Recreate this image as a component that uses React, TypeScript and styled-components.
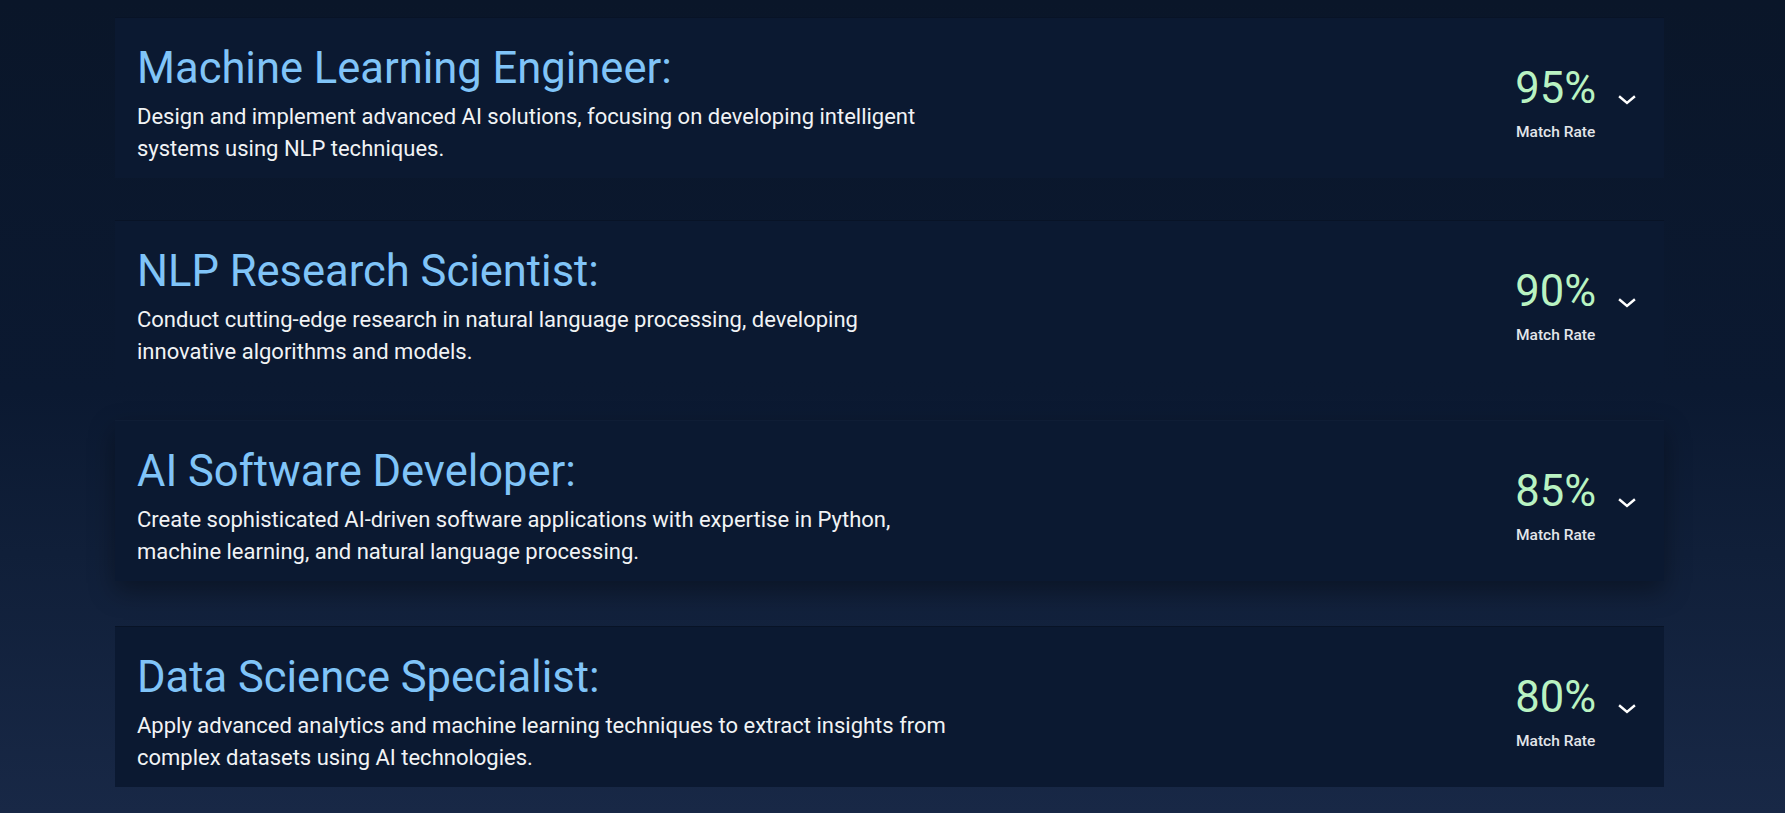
import React from "react";
import styled, { createGlobalStyle } from "styled-components";

const GlobalStyle = createGlobalStyle`
  html, body {
    margin: 0;
    padding: 0;
  }
  body {
    font-family: Roboto, "Liberation Sans", sans-serif;
    background: #0b1628;
  }
`;

const Page = styled.div`
  min-height: 813px;
  box-sizing: border-box;
  padding: 17px 0 26px 115px;
  background: linear-gradient(180deg, #0a1629 0%, #0b1931 48%, #101f39 68%, #182846 100%);
`;

const List = styled.div`
  width: 1549px;
  display: flex;
  flex-direction: column;
  gap: 42px;
`;

const Card = styled.div<{ active?: boolean }>`
  display: flex;
  align-items: center;
  justify-content: space-between;
  box-sizing: border-box;
  height: 161px;
  padding: 26px 28px 14px 22px;
  background: #0b1931;
  border-top: 1px solid ${(p) => (p.active ? "rgba(255,255,255,0.02)" : "rgba(0,0,0,0.22)")};
  transform: ${(p) => (p.active ? "translateY(-3px)" : "none")};
  box-shadow: ${(p) => (p.active ? "0 10px 24px rgba(0, 0, 0, 0.35)" : "none")};
`;

const Info = styled.div`
  display: flex;
  flex-direction: column;
  gap: 8px;
`;

const Title = styled.h2`
  margin: 0;
  font-size: 43.5px;
  font-weight: 400;
  line-height: 49px;
  color: #80c4f8;
`;

const Description = styled.p`
  margin: 0;
  max-width: 815px;
  font-size: 22px;
  line-height: 32px;
  color: #f1f3f5;
`;

const Side = styled.div`
  display: flex;
  align-items: center;
  gap: 22px;
  margin-top: -4px;
`;

const Score = styled.div`
  display: flex;
  flex-direction: column;
  align-items: center;
  gap: 10px;
`;

const Percent = styled.span`
  font-size: 43.5px;
  line-height: 49px;
  color: #b9f3c2;
`;

const Label = styled.span`
  font-size: 15.5px;
  font-weight: 500;
  line-height: 18px;
  color: #e3e6ea;
`;

const Toggle = styled.button`
  display: flex;
  align-items: center;
  justify-content: center;
  width: 18px;
  height: 18px;
  padding: 0;
  margin-top: -4px;
  border: none;
  background: none;
  color: #ffffff;
  cursor: pointer;
`;

const Chevron = () => (
  <svg width="18" height="10" viewBox="0 0 18 10" fill="none">
    <polyline
      points="2,2 9,8 16,2"
      stroke="currentColor"
      strokeWidth="2.4"
      strokeLinecap="square"
    />
  </svg>
);

const jobs = [
  {
    title: "Machine Learning Engineer:",
    text: "Design and implement advanced AI solutions, focusing on developing intelligent systems using NLP techniques.",
    rate: 95,
  },
  {
    title: "NLP Research Scientist:",
    text: "Conduct cutting-edge research in natural language processing, developing innovative algorithms and models.",
    rate: 90,
  },
  {
    title: "AI Software Developer:",
    text: "Create sophisticated AI-driven software applications with expertise in Python, machine learning, and natural language processing.",
    rate: 85,
    active: true,
  },
  {
    title: "Data Science Specialist:",
    text: "Apply advanced analytics and machine learning techniques to extract insights from complex datasets using AI technologies.",
    rate: 80,
  },
];

export default function App() {
  return (
    <>
      <GlobalStyle />
      <Page>
        <List>
          {jobs.map((job) => (
            <Card key={job.title} active={job.active}>
              <Info>
                <Title>{job.title}</Title>
                <Description>{job.text}</Description>
              </Info>
              <Side>
                <Score>
                  <Percent>{job.rate}%</Percent>
                  <Label>Match Rate</Label>
                </Score>
                <Toggle aria-label="expand">
                  <Chevron />
                </Toggle>
              </Side>
            </Card>
          ))}
        </List>
      </Page>
    </>
  );
}
